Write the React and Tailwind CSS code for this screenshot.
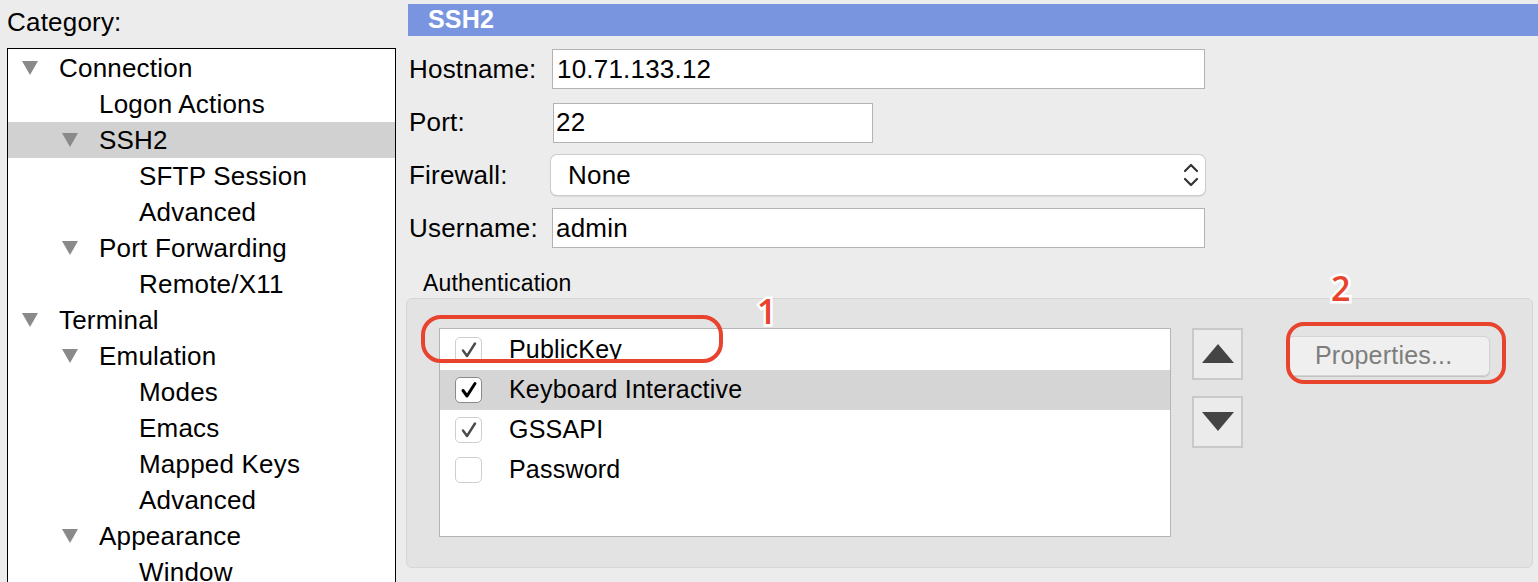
import React from "react";

const tree = [
  { label: "Connection", level: 0, open: true },
  { label: "Logon Actions", level: 1 },
  { label: "SSH2", level: 1, open: true, selected: true },
  { label: "SFTP Session", level: 2 },
  { label: "Advanced", level: 2 },
  { label: "Port Forwarding", level: 1, open: true },
  { label: "Remote/X11", level: 2 },
  { label: "Terminal", level: 0, open: true },
  { label: "Emulation", level: 1, open: true },
  { label: "Modes", level: 2 },
  { label: "Emacs", level: 2 },
  { label: "Mapped Keys", level: 2 },
  { label: "Advanced", level: 2 },
  { label: "Appearance", level: 1, open: true },
  { label: "Window", level: 2 },
];

const methods = [
  { label: "PublicKey", checked: true },
  { label: "Keyboard Interactive", checked: true, selected: true },
  { label: "GSSAPI", checked: true },
  { label: "Password", checked: false },
];

const indent = ["pl-[14px]", "pl-[54px]", "pl-[94px]"];

function Disclosure() {
  return (
    <svg width="16" height="14" viewBox="0 0 16 14">
      <path d="M0 0 L16 0 L8 14 Z" fill="#8a8a8a" />
    </svg>
  );
}

function TreeRow({ item }) {
  return (
    <div
      className={`flex h-[36px] items-center ${indent[item.level]} ${
        item.selected ? "bg-[#d1d1d1]" : ""
      }`}
    >
      <span className="flex w-[37px] shrink-0 items-center">
        {item.open && <Disclosure />}
      </span>
      <span>{item.label}</span>
    </div>
  );
}

function Field({ label, children }) {
  return (
    <div className="flex h-[40px] items-center">
      <span className="w-[144px] shrink-0 pl-[1px]">{label}</span>
      {children}
    </div>
  );
}

function Checkbox({ checked, strong }) {
  return (
    <span
      className={`flex h-[26px] w-[27px] shrink-0 items-center justify-center rounded-[5px] border bg-white ${
        strong ? "border-[#8a8a8a]" : "border-[#cfcfcf]"
      }`}
    >
      {checked && (
        <svg width="18" height="18" viewBox="0 0 18 18">
          <path
            d="M3 9.5 L7 15 L15 2.5"
            fill="none"
            stroke={strong ? "#000" : "#4a4a4a"}
            strokeWidth={strong ? "3" : "2.4"}
            strokeLinecap="round"
            strokeLinejoin="round"
          />
        </svg>
      )}
    </span>
  );
}

function ArrowButton({ up }) {
  return (
    <button className="flex h-[52px] w-[51px] items-center justify-center border-2 border-[#c9c9c9] bg-[#ebebeb]">
      <svg width="32" height="20" viewBox="0 0 32 20">
        <path d={up ? "M16 0 L32 19 L0 19 Z" : "M0 0 L32 0 L16 19 Z"} fill="#444" />
      </svg>
    </button>
  );
}

export default function App() {
  return (
    <div className="relative flex h-[582px] w-[1538px] overflow-hidden bg-[#ececec] font-['Liberation_Sans',Arial,sans-serif] text-[26px] tracking-[0.2px] text-black">
      {/* category tree */}
      <div className="flex w-[408px] shrink-0 flex-col pl-[7px]">
        <div className="flex h-[48px] shrink-0 items-center pb-[4px]">Category:</div>
        <div className="w-[389px] shrink-0 border border-black bg-white pt-[1px] pb-[20px]">
          {tree.map((item, i) => (
            <TreeRow key={i} item={item} />
          ))}
        </div>
      </div>

      {/* SSH2 panel */}
      <div className="flex flex-1 flex-col pt-[4px]">
        <div className="flex h-[32px] shrink-0 items-center bg-[#7a95e0] pl-[20px] text-[25px] font-bold text-white">
          SSH2
        </div>

        <div className="mt-[13px] flex flex-col gap-[13px]">
          <Field label="Hostname:">
            <div className="flex h-[40px] w-[653px] items-center border border-[#b3b3b3] bg-white pl-[4px]">
              10.71.133.12
            </div>
          </Field>
          <Field label="Port:">
            <div className="ml-[1px] mt-[1px] flex h-[40px] w-[320px] items-center border border-[#b3b3b3] bg-white pl-[2px]">
              22
            </div>
          </Field>
          <Field label="Firewall:">
            <div className="-ml-[1px] flex h-[40px] w-[654px] items-center justify-between rounded-[6px] bg-white pl-[17px] pr-[6px] shadow-[0_0_0_1px_#cdcdcd,0_1px_2px_rgba(0,0,0,0.25)]">
              <span>None</span>
              <svg width="16" height="26" viewBox="0 0 16 26">
                <path d="M2 9 L8 3 L14 9 M2 17 L8 23 L14 17" fill="none" stroke="#333" strokeWidth="2.2" strokeLinecap="round" strokeLinejoin="round" />
              </svg>
            </div>
          </Field>
          <Field label="Username:">
            <div className="flex h-[40px] w-[653px] items-center border border-[#b3b3b3] bg-white pl-[3px]">
              admin
            </div>
          </Field>
        </div>

        <div className="mt-[22px] pl-[15px] text-[23px] leading-[26px]">Authentication</div>

        <div className="-ml-[2px] mt-[2px] flex h-[270px] w-[1127px] shrink-0 rounded-[6px] border border-[#d6d6d6] bg-[#e3e3e3] pl-[32px] pt-[29px]">
          <div className="h-[209px] w-[732px] border border-[#b5b5b5] bg-white pt-[1px]">
            {methods.map((m) => (
              <div
                key={m.label}
                className={`flex h-[40px] items-center pl-[15px] ${m.selected ? "bg-[#d5d5d5]" : ""}`}
              >
                <Checkbox checked={m.checked} strong={m.selected} />
                <span className="pl-[27px] text-[25px]">{m.label}</span>
              </div>
            ))}
          </div>

          <div className="ml-[21px] flex flex-col gap-[16px]">
            <ArrowButton up />
            <ArrowButton />
          </div>

          <div className="ml-[44px] pt-[8px]">
            <button className="flex h-[40px] w-[203px] items-center rounded-[6px] border border-[#d3d3d3] bg-[#efefef] pl-[27px] text-[25px] text-[#7d7d7d] shadow-[0_1px_1px_rgba(0,0,0,0.15)]">
              Properties...
            </button>
          </div>
        </div>
      </div>

      {/* annotations */}
      <div className="absolute left-[421px] top-[315px] h-[48px] w-[302px] rounded-[20px] border-[4px] border-[#e8432d]" />
      <div className="absolute left-[1286px] top-[322px] h-[62px] w-[220px] rounded-[18px] border-[4px] border-[#e8432d]" />
      <div className="absolute left-[757px] top-[294px] text-[34px] font-semibold font-['Open_Sans',sans-serif] leading-none text-[#e8432d] [-webkit-text-stroke:5px_white] [paint-order:stroke_fill]">
        1
      </div>
      <div className="absolute left-[1331px] top-[271px] text-[34px] font-semibold font-['Open_Sans',sans-serif] leading-none text-[#e8432d] [-webkit-text-stroke:5px_white] [paint-order:stroke_fill]">
        2
      </div>
    </div>
  );
}
